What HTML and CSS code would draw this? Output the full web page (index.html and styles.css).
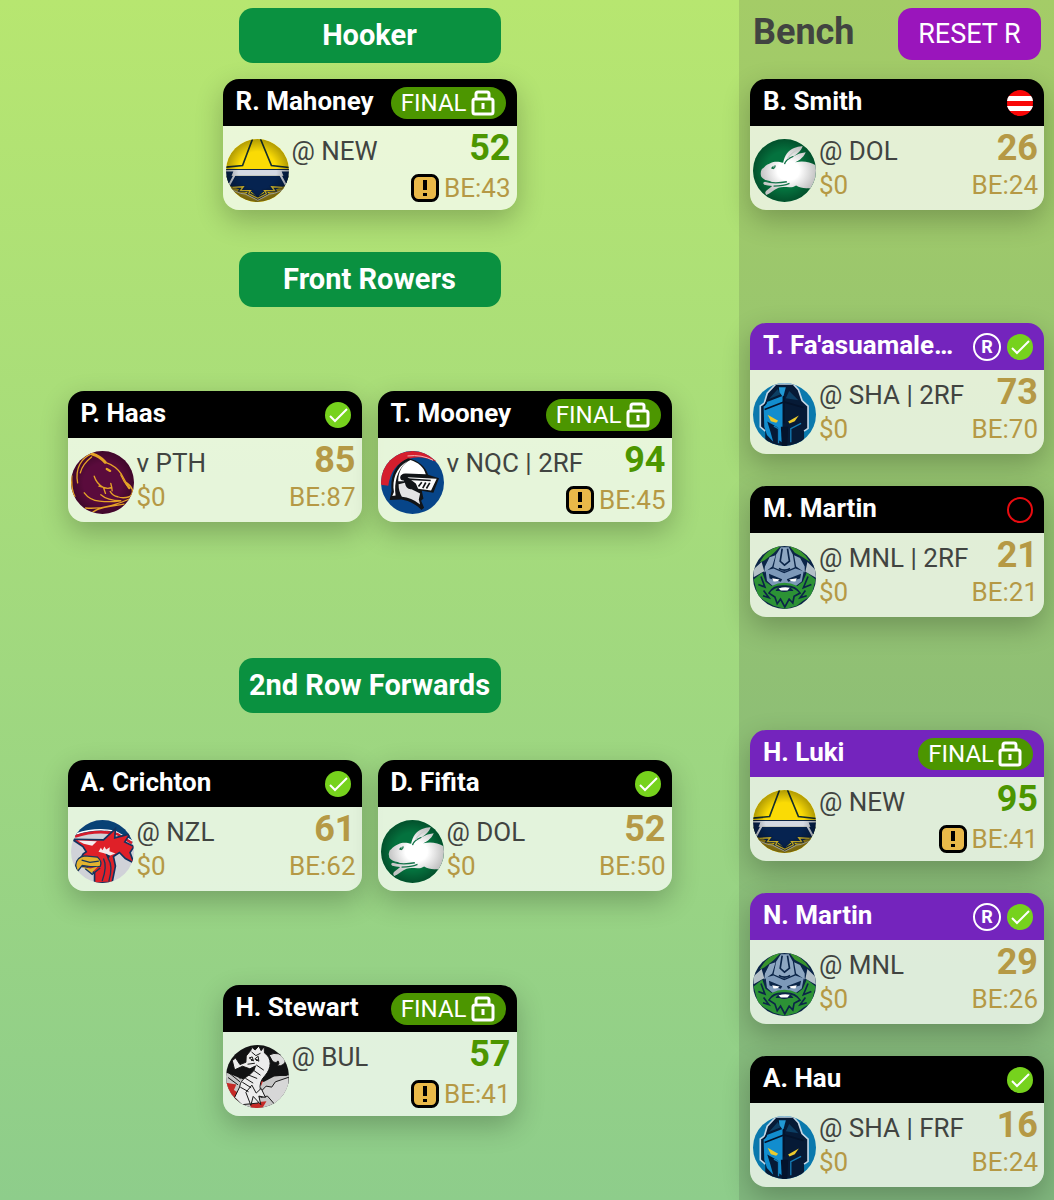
FILE: index.html
```html
<!DOCTYPE html>
<html lang="en">
<head>
  <meta charset="UTF-8">
  <meta name="viewport" content="width=device-width, initial-scale=1.0">
  <title>My Team</title>
  <link rel="stylesheet" href="styles.css">
</head>
<body>
  <!-- Logos and icons -->
  <svg class="sprites" aria-hidden="true">
    <defs>
      <clipPath id="round"><circle cx="95" cy="95" r="95"/></clipPath>
      <radialGradient id="shade"><stop offset="0.6" stop-color="#000" stop-opacity="0"/><stop offset="1" stop-color="#000" stop-opacity="0.3"/></radialGradient>
      <radialGradient id="fur"><stop offset="0.4" stop-color="#fff"/><stop offset="1" stop-color="#c4c4c4"/></radialGradient>
    </defs>

    <symbol id="cowboys" viewBox="0 0 190 190">
      <g clip-path="url(#round)">
        <rect width="190" height="190" fill="#fadb05"/>
        <path d="M80 0L50 80L0 85M104 0L137 80L190 86" fill="none" stroke="#16302c" stroke-width="5"/>
        <path d="M0 110H190V160H0Z" fill="#062350"/>
        <rect y="93" width="190" height="18" fill="#d5dae4"/>
        <path d="M0 92H190" stroke="#0c2447" stroke-width="3"/>
        <path d="M0 98H22L8 134H0ZM190 98H168L182 134H190Z" fill="#062350"/>
        <path d="M32 97L10 138M158 97L180 138" stroke="#d5dae4" stroke-width="6"/>
        <path d="M0 142L22 144L95 178L168 144L190 142V190H0Z" fill="#a38c16"/>
        <path d="M40 142L66 150L95 176L124 150L150 142V130H40Z" fill="#062350"/>
        <path d="M20 144L52 144L44 154L74 155L68 164L96 178L122 164L116 155L146 154L138 144L170 144" fill="none" stroke="#082147" stroke-width="9"/>
        <path d="M20 146L52 144L44 155L74 156L68 165L96 179L122 165L116 156L146 155L138 144L170 146" fill="none" stroke="#d1b52a" stroke-width="4"/>
        <path d="M14 152L44 164L58 166L96 185L132 166L146 164L176 152" fill="none" stroke="#c5c6b9" stroke-width="3"/>
        <circle cx="95" cy="95" r="95" fill="url(#shade)"/>
      </g>
    </symbol>

    <symbol id="rabbitohs" viewBox="0 0 190 190">
      <g clip-path="url(#round)">
        <rect width="190" height="190" fill="#04723e"/>
        <circle cx="95" cy="95" r="95" fill="url(#shade)"/>
        <path d="M26 92C34 86 38 78 52 73C66 66 80 69 91 72C95 50 106 34 124 27Q138 21 150 22C144 36 136 44 122 52Q140 41 159 40C152 57 136 69 114 75L128 70C148 65 172 68 190 80V152C172 146 148 152 130 140C115 151 94 140 77 147C63 153 50 165 40 169Q34 162 40 156L58 142Q44 141 34 138Q26 131 38 128L60 132L50 127Q32 124 25 114Q21 102 26 92Z" fill="url(#fur)"/>
        <path d="M95 76Q98 62 122 52M36 127Q60 136 102 129M62 142Q92 142 110 134" fill="none" stroke="#14734a" stroke-width="4"/>
        <path d="M104 60Q112 44 134 33" fill="none" stroke="#c9cfcc" stroke-width="4"/>
        <path d="M54 88Q60 78 69 80Q68 89 61 91Z" fill="#0b6d40"/>
        <circle cx="63" cy="84" r="2" fill="#fff"/>
      </g>
    </symbol>

    <symbol id="broncos" viewBox="0 0 190 190">
      <g clip-path="url(#round)">
        <rect width="190" height="190" fill="#5a0b3c"/>
        <circle cx="95" cy="95" r="95" fill="url(#shade)"/>
        <g fill="none" stroke="#e5a326" stroke-width="4" stroke-linecap="round" stroke-linejoin="round">
          <path d="M64 8C30 20 12 54 20 96M62 18Q34 40 28 66"/>
          <path d="M104 34C128 42 142 54 152 70L165 94Q180 104 185 116Q187 131 176 138Q156 144 141 138Q126 136 118 122"/>
          <path d="M150 72Q158 92 174 110M70 76Q77 99 98 110L84 106M98 110L104 128M98 110Q112 115 123 110L120 98M123 110L124 120"/>
          <path d="M40 126Q56 148 86 151Q118 155 150 150M90 132Q110 150 150 150M44 172C90 176 130 166 178 144M66 184C94 164 124 168 160 160"/>
          <path d="M108 54L118 60M168 100L176 112" stroke-width="7"/>
          <path d="M64 9Q88 16 103 34" stroke-width="9"/>
          <path d="M2 75Q0 116 11 137" stroke-width="5"/>
        </g>
      </g>
    </symbol>

    <symbol id="knights" viewBox="0 0 190 190">
      <g clip-path="url(#round)">
        <rect width="190" height="190" fill="#074589"/>
        <path d="M0 70Q20 5 95 0Q160 4 184 42Q127 8 83 24Q30 42 22 105L0 102Z" fill="#d51e2d"/>
        <path d="M80 15Q123 10 157 28" fill="none" stroke="#f2b9bb" stroke-width="3"/>
        <path d="M82 22C42 37 27 80 32 120L26 148L62 146C87 150 112 165 122 178L130 171L121 150L128 143L123 120L158 126L175 82L142 72C135 47 112 28 82 22Z" fill="#111417"/>
        <path d="M79 31C45 50 33 88 39 124L34 136L44 134C39 95 49 56 79 31Z" fill="#fff"/>
        <path d="M89 27C111 34 130 48 135 70L77 68Q68 66 63 72Q58 79 67 87L70 91L52 91C51 64 65 37 89 27Z" fill="#fff"/>
        <path d="M80 79L168 84L151 119L112 114L105 98Z" fill="#fafafa"/>
        <path d="M53 100L72 96Q76 117 92 115L106 122L118 128L114 146L118 161Q91 140 63 138Q53 121 53 100Z" fill="#e4e4e5"/>
        <circle cx="67" cy="80" r="9" fill="#111417"/>
        <path d="M69 84L150 89M123 94L113 107M135 95L126 112M147 96L137 113" fill="none" stroke="#111417" stroke-width="5"/>
      </g>
    </symbol>

    <symbol id="titans" viewBox="0 0 190 190">
      <g clip-path="url(#round)">
        <rect width="190" height="190" fill="#0a79ad"/>
        <path d="M69 3H121L137 20L148 53L166 70V137L154 146V190H37V146L22 132V69L34 61L43 31Z" fill="#061a36"/>
        <path d="M69 3H121L137 20L148 53L166 70V137L154 145M37 145L22 132V69L34 61L43 31L69 3" fill="none" stroke="#c5d7e6" stroke-width="5"/>
        <path d="M32 72L42 57L89 39V180L76 171L75 134L43 116L52 145L61 177L42 157L34 133Z" fill="#128dce"/>
        <path d="M78 13H99L91 43L80 29Z" fill="#2199d5"/>
        <path d="M48 48L75 18L82 35ZM109 24L137 52L99 46Z" fill="#0c3e64"/>
        <path d="M35 80L91 58M93 39V122M93 57L152 74M33 69L41 58" fill="none" stroke="#04132b" stroke-width="5"/>
        <path d="M44 96L76 114L70 120L54 115Z" fill="#ecca2c"/>
        <path d="M138 98L106 116L110 122L126 115Z" fill="#ecca2c"/>
        <path d="M145 122L114 138V179M77 182V138L63 130" fill="none" stroke="#147db7" stroke-width="4"/>
        <path d="M84 132H106L103 190H87Z" fill="#04132b"/>
      </g>
    </symbol>

    <symbol id="raiders" viewBox="0 0 190 190">
      <g clip-path="url(#round)">
        <rect width="190" height="190" fill="#0b2548"/>
        <path d="M20 50Q44 5 84 0L62 22L34 44ZM110 0Q148 8 172 48L150 34L126 20Z" fill="#38942d"/>
        <path d="M70 26L84 4H108L120 26L126 64L99 76L90 76L62 64Z" fill="#8da6c1"/>
        <path d="M36 62L50 34L68 28L58 62L34 80ZM124 28L142 36L156 62V80L130 62Z" fill="#8da6c1"/>
        <path d="M2 70L26 48L34 76L2 94ZM164 48L188 72L190 96L158 78Z" fill="#b4c0c8"/>
        <path d="M88 8L82 46L95 58L110 46L104 8" fill="none" stroke="#0b2548" stroke-width="5"/>
        <path d="M38 74L62 68L94 82L128 68L153 76L147 107L126 123H62L42 105Z" fill="#7d99b9"/>
        <path d="M78 68Q95 78 112 68" fill="none" stroke="#0b2548" stroke-width="5"/>
        <path d="M48 84L88 100L84 108L50 98ZM145 84L102 100L106 108L142 98Z" fill="#0b2548"/>
        <path d="M58 97L80 101Q76 109 62 107ZM132 97L109 101Q114 109 128 107Z" fill="#fff"/>
        <path d="M2 101L28 80L38 108L56 121Q94 101 134 121L150 108L162 80L189 101L176 151L151 165L132 180L97 190L62 180L35 165L15 151Z" fill="#2c9235"/>
        <path d="M24 92L36 124L16 116M166 92L152 126L176 116M32 134L48 156L30 150M158 134L142 156L162 150M66 154L48 142Q61 119 94 121Q127 119 142 142L124 152L120 172L109 160L96 184L83 160L73 174Z" fill="none" stroke="#0b2548" stroke-width="5"/>
        <path d="M68 136Q76 120 94 124Q114 120 122 136L108 136Q94 142 80 136Z" fill="#0b2548"/>
        <path d="M77 128Q94 122 111 126L104 134H84Z" fill="#fff"/>
      </g>
    </symbol>

    <symbol id="roosters" viewBox="0 0 190 190">
      <g clip-path="url(#round)">
        <rect width="190" height="190" fill="#d0d2d8"/>
        <path d="M0 0H190V70L143 45L100 32L6 50Z" fill="#084275"/>
        <path d="M16 42Q76 22 132 34L185 64" fill="none" stroke="#fff" stroke-width="5"/>
        <path d="M12 50Q76 28 139 42L184 70" fill="none" stroke="#d51c2c" stroke-width="8"/>
        <path d="M10 58L98 60L134 26L132 54L178 42L162 66L190 80L178 98L190 130L164 116L146 98L128 110L134 139L124 188L71 190L71 160L49 145L18 135L37 102L46 96L36 80L9 62Z" fill="#df2028" stroke="#12335f" stroke-width="5"/>
        <path d="M20 62L78 64L64 78L38 72Z" fill="#f4eef0"/>
        <path d="M83 96L90 84L95 91L101 80L106 89L117 82L116 94L134 101L116 108L100 100Z" fill="#f5e9e9"/>
        <path d="M104 101L118 108L112 120Z" fill="#112f55"/>
        <path d="M14 137Q16 111 42 108L80 112Q95 126 88 140L58 141L34 137L19 156Z" fill="#e2b32f" stroke="#15385e" stroke-width="4"/>
        <path d="M32 141L59 146L81 140L62 160Z" fill="#e2b32f"/>
        <path d="M32 121L57 128L84 124M43 147L64 164L88 145M98 116Q110 140 94 184M112 116Q128 140 114 186" fill="none" stroke="#15385e" stroke-width="4"/>
      </g>
    </symbol>

    <symbol id="dragons" viewBox="0 0 190 190">
      <g clip-path="url(#round)">
        <rect width="190" height="190" fill="#111213"/>
        <path d="M0 83L51 103L83 116L115 111L145 95L190 91V190H0Z" fill="#c7c7c7"/>
        <path d="M0 114L31 119L24 136L47 151L33 169L8 139ZM90 112L112 108L106 123ZM70 175L122 170L110 190H76Z" fill="#c52a27"/>
        <g stroke="#151515" stroke-width="3" stroke-linejoin="round">
          <path d="M75 16L78 7L88 15L99 3L106 17L115 5L116 24C140 39 137 71 118 92Q98 112 104 137L97 175L48 180L26 158L41 127C45 97 68 98 84 77L89 63L72 72L50 64L26 75L19 47L29 39L42 59L60 52L61 33Z" fill="#ececec"/>
          <path d="M130 30Q160 16 180 43Q178 65 154 63Q164 55 157 48Q149 58 139 47Z" fill="#ddd"/>
          <path d="M101 145L121 124L138 127L149 111L190 97V166L153 186L125 154L105 158Z" fill="#d7d7d7"/>
          <path d="M60 143L78 121L91 145L106 131L119 158L99 154L105 180L82 155L75 182Z" fill="#ededed"/>
          <path d="M4 80L42 111M12 64L44 103M6 98L36 120M58 100L82 115M49 112L76 129M43 127L68 141M69 91L94 101M84 77L104 91M91 60L114 76M70 39L79 36L83 48ZM87 42L97 34L99 49ZM65 58L87 55M77 21L90 32L104 25M140 91Q151 74 159 86Q178 72 183 92Z" fill="none"/>
        </g>
        <circle cx="78" cy="45" r="3" fill="#111"/>
        <circle cx="93" cy="45" r="3" fill="#111"/>
      </g>
    </symbol>

    <symbol id="check" viewBox="0 0 26 26">
      <circle cx="13" cy="13" r="13" fill="#76d21d"/>
      <path d="M5 14L10 19L22 7" fill="none" stroke="#fff" stroke-width="2"/>
    </symbol>
    <symbol id="stripes" viewBox="0 0 26 26">
      <circle cx="13" cy="13" r="13" fill="#f90707"/>
      <path d="M2 6H24Q26 8 26 11H0Q0 8 2 6ZM0 16H26Q25 19 23 21H3Q1 19 0 16Z" fill="#fff"/>
    </symbol>
    <symbol id="ring" viewBox="0 0 26 26">
      <circle cx="13" cy="13" r="12" fill="none" stroke="#e80b10" stroke-width="2"/>
    </symbol>
    <symbol id="lock" viewBox="0 0 24 26">
      <path d="M5 9V4Q5 2 7 2H16Q18 2 18 4V9M4 9H20Q22 9 22 11V22Q22 24 20 24H4Q2 24 2 22V11Q2 9 4 9Z" fill="none" stroke="#fff" stroke-width="3"/>
      <path d="M12 13V19" stroke="#fff" stroke-width="3"/>
    </symbol>
    <symbol id="alert" viewBox="0 0 28 28">
      <rect x="1.500" y="1.500" width="25" height="25" rx="6" fill="#e9b949" stroke="#000" stroke-width="3"/>
      <path d="M14 6V16M14 19V22" stroke="#000" stroke-width="4"/>
    </symbol>
  </svg>

  <div class="team-page">
    <main class="field">
      <section class="position">
        <h2 class="position-title">Hooker</h2>
        <div class="players">
          <article class="card">
            <header class="card-head">
              <h3 class="name">R. Mahoney</h3>
              <span class="final">FINAL<svg class="lock"><use href="#lock"/></svg></span>
            </header>
            <div class="card-body">
              <svg class="logo" role="img" aria-label="Cowboys"><use href="#cowboys"/></svg>
              <div class="match"><p>@ NEW</p></div>
              <div class="points done">
                <strong class="score">52</strong>
                <p class="be"><svg class="alert"><use href="#alert"/></svg>BE:43</p>
              </div>
            </div>
          </article>
        </div>
      </section>

      <section class="position">
        <h2 class="position-title">Front Rowers</h2>
        <div class="players spaced">
          <article class="card">
            <header class="card-head">
              <h3 class="name">P. Haas</h3>
              <svg class="status"><use href="#check"/></svg>
            </header>
            <div class="card-body">
              <svg class="logo" role="img" aria-label="Broncos"><use href="#broncos"/></svg>
              <div class="match"><p>v PTH</p><p class="price">$0</p></div>
              <div class="points">
                <strong class="score">85</strong>
                <p class="be">BE:87</p>
              </div>
            </div>
          </article>
          <article class="card">
            <header class="card-head">
              <h3 class="name">T. Mooney</h3>
              <span class="final">FINAL<svg class="lock"><use href="#lock"/></svg></span>
            </header>
            <div class="card-body">
              <svg class="logo" role="img" aria-label="Knights"><use href="#knights"/></svg>
              <div class="match"><p>v NQC | 2RF</p></div>
              <div class="points done">
                <strong class="score">94</strong>
                <p class="be"><svg class="alert"><use href="#alert"/></svg>BE:45</p>
              </div>
            </div>
          </article>
        </div>
      </section>

      <section class="position">
        <h2 class="position-title">2nd Row Forwards</h2>
        <div class="players back-row">
          <article class="card">
            <header class="card-head">
              <h3 class="name">A. Crichton</h3>
              <svg class="status"><use href="#check"/></svg>
            </header>
            <div class="card-body">
              <svg class="logo" role="img" aria-label="Roosters"><use href="#roosters"/></svg>
              <div class="match"><p>@ NZL</p><p class="price">$0</p></div>
              <div class="points">
                <strong class="score">61</strong>
                <p class="be">BE:62</p>
              </div>
            </div>
          </article>
          <article class="card">
            <header class="card-head">
              <h3 class="name">D. Fifita</h3>
              <svg class="status"><use href="#check"/></svg>
            </header>
            <div class="card-body">
              <svg class="logo" role="img" aria-label="Rabbitohs"><use href="#rabbitohs"/></svg>
              <div class="match"><p>@ DOL</p><p class="price">$0</p></div>
              <div class="points">
                <strong class="score">52</strong>
                <p class="be">BE:50</p>
              </div>
            </div>
          </article>
          <article class="card">
            <header class="card-head">
              <h3 class="name">H. Stewart</h3>
              <span class="final">FINAL<svg class="lock"><use href="#lock"/></svg></span>
            </header>
            <div class="card-body">
              <svg class="logo" role="img" aria-label="Dragons"><use href="#dragons"/></svg>
              <div class="match"><p>@ BUL</p></div>
              <div class="points done">
                <strong class="score">57</strong>
                <p class="be"><svg class="alert"><use href="#alert"/></svg>BE:41</p>
              </div>
            </div>
          </article>
        </div>
      </section>
    </main>

    <aside class="bench">
      <div class="bench-head">
        <h2 class="bench-title">Bench</h2>
        <button class="reset" type="button">RESET R</button>
      </div>

      <div class="bench-group">
        <article class="card">
          <header class="card-head">
            <h3 class="name">B. Smith</h3>
            <svg class="status"><use href="#stripes"/></svg>
          </header>
          <div class="card-body">
            <svg class="logo" role="img" aria-label="Rabbitohs"><use href="#rabbitohs"/></svg>
            <div class="match"><p>@ DOL</p><p class="price">$0</p></div>
            <div class="points">
              <strong class="score">26</strong>
              <p class="be">BE:24</p>
            </div>
          </div>
        </article>
      </div>

      <div class="bench-group">
        <article class="card">
          <header class="card-head reserve">
            <h3 class="name">T. Fa'asuamale…</h3>
            <span class="r-mark">R</span>
            <svg class="status"><use href="#check"/></svg>
          </header>
          <div class="card-body">
            <svg class="logo" role="img" aria-label="Titans"><use href="#titans"/></svg>
            <div class="match"><p>@ SHA | 2RF</p><p class="price">$0</p></div>
            <div class="points">
              <strong class="score">73</strong>
              <p class="be">BE:70</p>
            </div>
          </div>
        </article>
        <article class="card">
          <header class="card-head">
            <h3 class="name">M. Martin</h3>
            <svg class="status"><use href="#ring"/></svg>
          </header>
          <div class="card-body">
            <svg class="logo" role="img" aria-label="Raiders"><use href="#raiders"/></svg>
            <div class="match"><p>@ MNL | 2RF</p><p class="price">$0</p></div>
            <div class="points">
              <strong class="score">21</strong>
              <p class="be">BE:21</p>
            </div>
          </div>
        </article>
      </div>

      <div class="bench-group">
        <article class="card">
          <header class="card-head reserve">
            <h3 class="name">H. Luki</h3>
            <span class="final">FINAL<svg class="lock"><use href="#lock"/></svg></span>
          </header>
          <div class="card-body">
            <svg class="logo" role="img" aria-label="Cowboys"><use href="#cowboys"/></svg>
            <div class="match"><p>@ NEW</p></div>
            <div class="points done">
              <strong class="score">95</strong>
              <p class="be"><svg class="alert"><use href="#alert"/></svg>BE:41</p>
            </div>
          </div>
        </article>
        <article class="card">
          <header class="card-head reserve">
            <h3 class="name">N. Martin</h3>
            <span class="r-mark">R</span>
            <svg class="status"><use href="#check"/></svg>
          </header>
          <div class="card-body">
            <svg class="logo" role="img" aria-label="Raiders"><use href="#raiders"/></svg>
            <div class="match"><p>@ MNL</p><p class="price">$0</p></div>
            <div class="points">
              <strong class="score">29</strong>
              <p class="be">BE:26</p>
            </div>
          </div>
        </article>
        <article class="card">
          <header class="card-head">
            <h3 class="name">A. Hau</h3>
            <svg class="status"><use href="#check"/></svg>
          </header>
          <div class="card-body">
            <svg class="logo" role="img" aria-label="Titans"><use href="#titans"/></svg>
            <div class="match"><p>@ SHA | FRF</p><p class="price">$0</p></div>
            <div class="points">
              <strong class="score">16</strong>
              <p class="be">BE:24</p>
            </div>
          </div>
        </article>
      </div>
    </aside>
  </div>
</body>
</html>
```
FILE: styles.css
```css
* {
  box-sizing: border-box;
}
body {
  margin: 0;
  font-family: Roboto, "Liberation Sans", sans-serif;
  font-size: 26px;
  color: #414441;
}
h2, h3, p {
  margin: 0;
}
.sprites {
  position: absolute;
  width: 0;
  height: 0;
}

/* Page */
.team-page {
  display: grid;
  grid-template-columns: 1fr 315px;
  min-height: 100vh;
  background: linear-gradient(#b7e670, #8ecd8b);
}
.field {
  display: flex;
  flex-direction: column;
  gap: 42px;
  padding: 8px 16px;
}
.bench {
  padding: 8px 10px 0 11px;
  background-color: rgba(50, 50, 50, 0.14);
}

/* Positions */
.position {
  display: flex;
  flex-direction: column;
  align-items: center;
  gap: 16px;
}
.position-title {
  width: 262px;
  height: 55px;
  border-radius: 14px;
  background-color: #0a9140;
  color: white;
  font-size: 29px;
  font-weight: 700;
  line-height: 54px;
  text-align: center;
  white-space: nowrap;
}
.players {
  display: flex;
  flex-wrap: wrap;
  justify-content: center;
  gap: 16px;
}
.players.spaced {
  padding: 68px 0 94px;
}
.players.back-row {
  padding-top: 31px;
  row-gap: 94px;
}

/* Player card */
.card {
  width: 294px;
  border-radius: 16px;
  overflow: hidden;
  box-shadow: 0 10px 28px rgba(0, 0, 0, 0.24);
}
.card-head {
  display: flex;
  align-items: center;
  gap: 6px;
  height: 47px;
  padding: 0 11px 0 13px;
  background-color: black;
  color: white;
}
.card-head.reserve {
  background-color: #7424bd;
}
.name {
  flex: 1;
  font-size: 26px;
  font-weight: 700;
  line-height: 44px;
  padding-bottom: 3px;
  white-space: nowrap;
}
.status {
  width: 26px;
  height: 26px;
}
.r-mark {
  width: 28px;
  height: 28px;
  border: 2px solid white;
  border-radius: 50%;
  font-size: 18px;
  font-weight: 700;
  line-height: 24px;
  text-align: center;
}
.final {
  display: flex;
  align-items: center;
  gap: 4px;
  height: 32px;
  padding: 0 11px 0 10px;
  border-radius: 16px;
  background-color: #4c9600;
  font-size: 24px;
  line-height: 30px;
}
.lock {
  width: 24px;
  height: 26px;
}
.card-body {
  display: flex;
  height: 84px;
  padding: 0 6px 0 3px;
  background-color: rgba(255, 255, 255, 0.72);
}
.logo {
  flex: none;
  width: 63px;
  height: 63px;
  margin-top: 13px;
}
.match {
  flex: 1;
  min-width: 0;
  padding: 8px 0 0 3px;
  line-height: 34px;
  white-space: nowrap;
}
.points {
  display: flex;
  flex-direction: column;
  align-items: flex-end;
}
.score {
  color: #b59945;
  font-size: 36px;
  font-weight: 700;
  line-height: 44px;
}
.done .score {
  color: #4c9600;
}
.price, .be {
  color: #b59945;
}
.be {
  display: flex;
  align-items: center;
  gap: 5px;
  line-height: 30px;
}
.done .be {
  line-height: 36px;
}
.alert {
  width: 28px;
  height: 28px;
}

/* Bench */
.bench-head {
  display: flex;
  justify-content: space-between;
  height: 71px;
  padding: 0 3px;
}
.bench-title {
  font-size: 36px;
  font-weight: 700;
  line-height: 48px;
}
.reset {
  width: 143px;
  height: 52px;
  padding: 0;
  border: none;
  border-radius: 14px;
  background-color: #9a15bc;
  color: white;
  font-family: inherit;
  font-size: 27px;
  cursor: pointer;
}
.bench-group {
  display: flex;
  flex-direction: column;
  gap: 32px;
  margin-bottom: 113px;
}
.bench-group:last-child {
  margin-bottom: 0;
  padding-bottom: 12px;
}
```
